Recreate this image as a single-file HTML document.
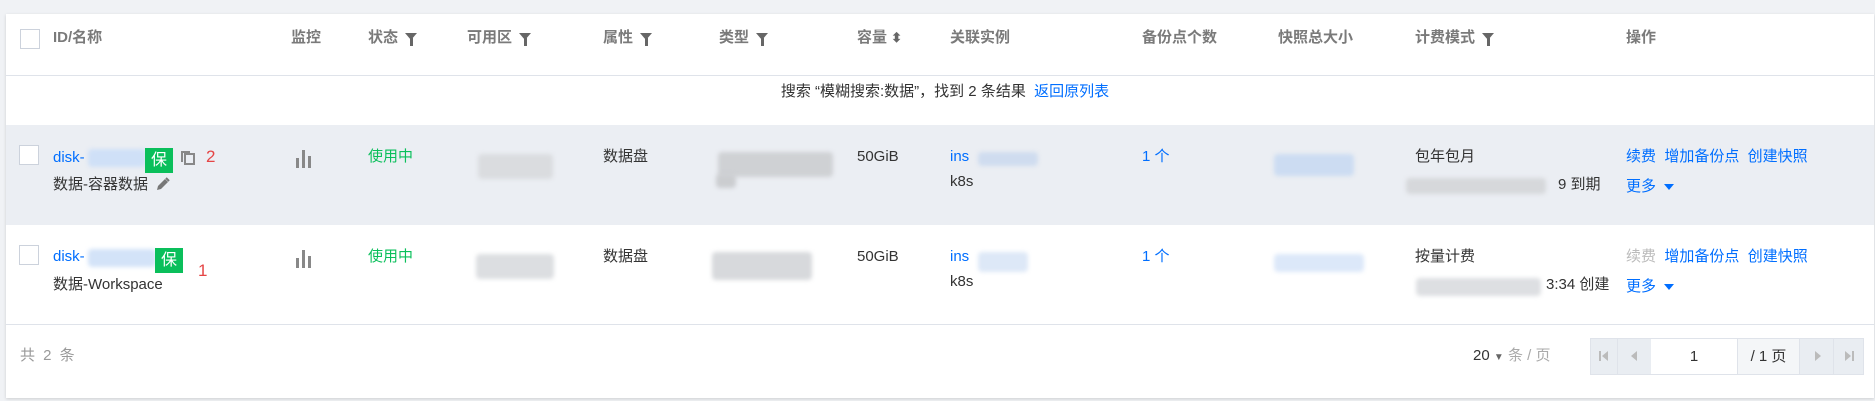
<!DOCTYPE html>
<html><head><meta charset="utf-8"><style>
*{margin:0;padding:0;box-sizing:border-box}
body{width:1875px;height:401px;background:#f0f2f5;font-family:"Liberation Sans","Noto Sans CJK SC",sans-serif;font-size:15px;color:#333;position:relative;overflow:hidden}
.card{position:absolute;left:6px;top:14px;width:1868px;height:384px;background:#fff;box-shadow:0 1px 3px rgba(0,0,0,.15)}
.a{position:absolute;white-space:nowrap;line-height:18px}
.h{color:#7a7a7a;font-weight:bold}
.l{color:#006eff}
.g{color:#0abf5b}
.cb{position:absolute;width:20px;height:20px;border:1px solid #ccd2dc;background:#fff}
.line{position:absolute;left:0;width:100%;height:1px;background:#dfe3ea}
.blur{position:absolute;filter:blur(2px);border-radius:4px}
.badge{position:absolute;background:#0abf5b;color:#fff;font-size:16px;text-align:center;line-height:25px;width:28px;height:25px}
.f{display:inline-block;width:0;height:0;border-left:6px solid transparent;border-right:6px solid transparent;border-top:7px solid #666;vertical-align:middle;margin-left:7px;position:relative;top:-2px}
.f::after{content:"";position:absolute;left:-1.5px;top:-2px;width:3px;height:8px;background:#666}
.tri{display:inline-block;width:0;height:0;border-left:5px solid transparent;border-right:5px solid transparent;border-top:6px solid #006eff;vertical-align:middle;margin-left:8px}
.pg{position:absolute;top:338px;height:37px;border:1px solid #dfe3ea;background:#e9edf2}
</style></head><body>
<div class="card">
<div class="cb" style="left:14px;top:15px"></div>
<div class="a h" style="left:47px;top:15px">ID/名称</div>
<div class="a h" style="left:285px;top:15px">监控</div>
<div class="a h" style="left:362px;top:15px">状态<span class="f"></span></div>
<div class="a h" style="left:461px;top:15px">可用区<span class="f"></span></div>
<div class="a h" style="left:597px;top:15px">属性<span class="f"></span></div>
<div class="a h" style="left:713px;top:15px">类型<span class="f"></span></div>
<div class="a h" style="left:851px;top:15px">容量 <span style="font-size:13px;color:#666">⬍</span></div>
<div class="a h" style="left:944px;top:15px">关联实例</div>
<div class="a h" style="left:1136px;top:15px">备份点个数</div>
<div class="a h" style="left:1272px;top:15px">快照总大小</div>
<div class="a h" style="left:1409px;top:15px">计费模式<span class="f"></span></div>
<div class="a h" style="left:1620px;top:15px">操作</div>
<div class="line" style="top:61px"></div>
<div class="a" style="left:0;width:100%;text-align:center;top:69px;padding-left:10px">搜索 “模糊搜索:数据”，找到 2 条结果 &nbsp;<span class="l">返回原列表</span></div>
<div style="position:absolute;left:0;top:111px;width:100%;height:100px;background:#ebeef3"></div>
<!-- row1 -->
<div class="cb" style="left:13px;top:131px"></div>
<div class="a l" style="left:47px;top:135px">disk-</div>
<div class="blur" style="left:82px;top:135px;width:58px;height:18px;background:#cfe0f7"></div>
<div class="badge" style="left:139px;top:134px">保</div>
<svg class="a" style="left:174px;top:136px" width="16" height="15" viewBox="0 0 16 15"><path d="M1 1h9v2H3v9H1z" fill="#888"/><path d="M5 4h9v10H5z" fill="none" stroke="#888" stroke-width="2"/></svg>
<div class="a" style="left:200px;top:134px;color:#e54545;font-size:17px">2</div>
<div class="a" style="left:47px;top:162px">数据-容器数据</div>
<svg class="a" style="left:150px;top:163px" width="14" height="14" viewBox="0 0 14 14"><path d="M1 13l1-4 7-7 3 3-7 7z" fill="#777"/><path d="M10 1l3 3" stroke="#777" stroke-width="2"/></svg>
<svg class="a" style="left:290px;top:136px" width="15" height="18"><rect x="0" y="8" width="3" height="10" fill="#888"/><rect x="6" y="0" width="3" height="18" fill="#888"/><rect x="12" y="6" width="3" height="12" fill="#888"/></svg>
<div class="a g" style="left:362px;top:134px">使用中</div>
<div class="blur" style="left:472px;top:140px;width:75px;height:25px;background:#dadcdf"></div>
<div class="a" style="left:597px;top:134px">数据盘</div>
<div class="blur" style="left:712px;top:138px;width:115px;height:25px;background:#cfd1d4"></div>
<div class="blur" style="left:710px;top:160px;width:20px;height:14px;background:#cbcdd0"></div>
<div class="a" style="left:851px;top:134px">50GiB</div>
<div class="a l" style="left:944px;top:134px">ins</div>
<div class="blur" style="left:972px;top:138px;width:60px;height:14px;background:#cfdcef"></div>
<div class="a" style="left:944px;top:159px">k8s</div>
<div class="a l" style="left:1136px;top:134px">1 个</div>
<div class="blur" style="left:1268px;top:140px;width:80px;height:22px;background:#ccdcf2"></div>
<div class="a" style="left:1409px;top:134px">包年包月</div>
<div class="blur" style="left:1400px;top:164px;width:140px;height:16px;background:#d6d8db"></div>
<div class="a" style="left:1552px;top:162px">9 到期</div>
<div class="a l" style="left:1620px;top:134px">续费 &nbsp;增加备份点 &nbsp;创建快照</div>
<div class="a l" style="left:1620px;top:164px">更多<span class="tri"></span></div>
<!-- row2 -->
<div class="cb" style="left:13px;top:231px"></div>
<div class="a l" style="left:47px;top:234px">disk-</div>
<div class="blur" style="left:82px;top:235px;width:68px;height:18px;background:#d3e3f8"></div>
<div class="badge" style="left:149px;top:234px">保</div>
<div class="a" style="left:192px;top:248px;color:#e54545;font-size:17px">1</div>
<div class="a" style="left:47px;top:262px">数据-Workspace</div>
<svg class="a" style="left:290px;top:236px" width="15" height="18"><rect x="0" y="8" width="3" height="10" fill="#888"/><rect x="6" y="0" width="3" height="18" fill="#888"/><rect x="12" y="6" width="3" height="12" fill="#888"/></svg>
<div class="a g" style="left:362px;top:234px">使用中</div>
<div class="blur" style="left:470px;top:240px;width:78px;height:25px;background:#dcdee1"></div>
<div class="a" style="left:597px;top:234px">数据盘</div>
<div class="blur" style="left:706px;top:238px;width:100px;height:28px;background:#d7d9dc"></div>
<div class="a" style="left:851px;top:234px">50GiB</div>
<div class="a l" style="left:944px;top:234px">ins</div>
<div class="blur" style="left:972px;top:238px;width:50px;height:20px;background:#dde8f7"></div>
<div class="a" style="left:944px;top:259px">k8s</div>
<div class="a l" style="left:1136px;top:234px">1 个</div>
<div class="blur" style="left:1268px;top:240px;width:90px;height:18px;background:#dce8f9"></div>
<div class="a" style="left:1409px;top:234px">按量计费</div>
<div class="blur" style="left:1410px;top:264px;width:125px;height:18px;background:#dddfe2"></div>
<div class="a" style="left:1540px;top:262px">3:34 创建</div>
<div class="a" style="left:1620px;top:234px"><span style="color:#bbb">续费</span> &nbsp;<span class="l">增加备份点 &nbsp;创建快照</span></div>
<div class="a l" style="left:1620px;top:264px">更多<span class="tri"></span></div>
<div class="line" style="top:310px"></div>
<div class="a" style="left:14px;top:333px;color:#999;letter-spacing:2px">共 2 条</div>
<div class="a" style="left:1467px;top:333px">20 <span style="font-size:10px;color:#666">▼</span> <span style="color:#aaa">条 / 页</span></div>
</div>
<div class="pg" style="left:1590px;width:274px"></div>
<div style="position:absolute;left:1617px;top:338px;width:1px;height:37px;background:#dfe3ea"></div>
<div style="position:absolute;left:1651px;top:339px;width:86px;height:35px;background:#fff;text-align:center;line-height:35px">1</div>
<div style="position:absolute;left:1737px;top:339px;width:63px;height:35px;background:#f4f6f8;text-align:center;line-height:35px;border-left:1px solid #dfe3ea;border-right:1px solid #dfe3ea">/ 1 页</div>
<div style="position:absolute;left:1833px;top:338px;width:1px;height:37px;background:#dfe3ea"></div>
<svg style="position:absolute;left:1597px;top:349px" width="14" height="14"><rect x="2" y="2" width="2" height="10" fill="#bbb"/><path d="M11 2L5 7l6 5z" fill="#bbb"/></svg>
<svg style="position:absolute;left:1628px;top:349px" width="14" height="14"><path d="M9 2L3 7l6 5z" fill="#bbb"/></svg>
<svg style="position:absolute;left:1810px;top:349px" width="14" height="14"><path d="M5 2l6 5-6 5z" fill="#bbb"/></svg>
<svg style="position:absolute;left:1842px;top:349px" width="14" height="14"><path d="M3 2l6 5-6 5z" fill="#bbb"/><rect x="10" y="2" width="2" height="10" fill="#bbb"/></svg>
</body></html>
